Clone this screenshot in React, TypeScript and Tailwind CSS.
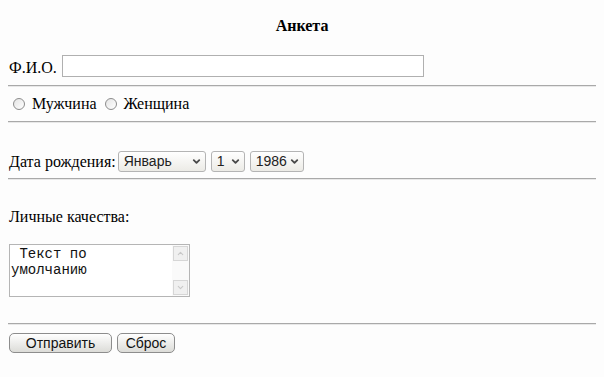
import { ChevronDown } from 'lucide-react'

const serif = { fontFamily: '"Liberation Serif", "Times New Roman", serif' }

function Rule() {
    return <div className="mx-2 h-[2px] border-t border-[#a9a9a9] border-b border-b-[#e8e8e8]" />
}

function Radio({ label }: { label: string }) {
    return (
        <label className="flex items-center">
            <span className="mr-[7px] h-[12px] w-[12px] rounded-full border border-[#8c8c8c] bg-gradient-to-br from-[#e4e4e4] to-white" />
            <span>{label}</span>
        </label>
    )
}

function Select({ value, width }: { value: string, width: number }) {
    return (
        <div
            className="flex h-[21px] items-center justify-between rounded-[3px] border border-[#b4b4b4] bg-gradient-to-b from-white to-[#ecebe6] pl-[5px] pr-[3px] text-[14px] text-[#222]"
            style={{ width, fontFamily: '"Liberation Sans", Arial, sans-serif' }}>
            <span>{value}</span>
            <ChevronDown className="h-[11px] w-[11px] text-[#4a4a4a]" strokeWidth={4} />
        </div>
    )
}

function Button({ children, width }: { children: string, width: number }) {
    return (
        <button
            className="h-[20px] rounded-[5px] border border-[#8d8d8d] bg-gradient-to-b from-white to-[#dcdcd8] text-[14px] leading-none text-[#111]"
            style={{ width, fontFamily: '"Liberation Sans", Arial, sans-serif' }}>
            {children}
        </button>
    )
}

export default function App() {
    return (
        <div className="h-[377px] w-[604px] bg-[#fdfdfd] text-[16px] text-black" style={serif}>
            <div className="pt-[17px] text-center text-[16px] font-bold leading-[18px]">Анкета</div>

            <div className="mt-[20px] flex h-[22px] items-center pl-[9px]">
                <span className="mr-[5px] pt-[3px]">Ф.И.О.</span>
                <div className="h-[22px] w-[362px] border border-[#b0b0b0] bg-white" />
            </div>

            <div className="mt-[8px]"><Rule /></div>

            <div className="mt-[8px] flex h-[18px] items-center gap-[8px] pl-[13px]">
                <Radio label="Мужчина" />
                <Radio label="Женщина" />
            </div>

            <div className="mt-[8px]"><Rule /></div>

            <div className="mt-[27px] flex h-[22px] items-center gap-[5px] pl-[9px]">
                <span className="mr-[-3px] pt-[2px]">Дата рождения:</span>
                <Select value="Январь" width={88} />
                <Select value="1" width={34} />
                <Select value="1986" width={54} />
            </div>

            <div className="mt-[6px]"><Rule /></div>

            <div className="mt-[27px] pl-[9px] leading-[20px]">Личные качества:</div>

            <div className="ml-[9px] mt-[17px] flex h-[53px] w-[181px] border border-[#b5b5b5] bg-white">
                <div
                    className="flex-1 whitespace-pre pl-[1px] pt-[1px] text-[14px] leading-[16px] text-[#111]"
                    style={{ fontFamily: '"Liberation Mono", "Courier New", monospace' }}>
                    {' Текст по\nумолчанию'}
                </div>
                <div className="flex w-[17px] flex-col justify-between bg-[#fafafa] p-[1px]">
                    <div className="flex h-[15px] items-center justify-center border border-[#d6d6d6] bg-[#f0f0f0]">
                        <ChevronDown className="h-[9px] w-[9px] rotate-180 text-[#c8c8c8]" strokeWidth={3} />
                    </div>
                    <div className="flex h-[15px] items-center justify-center border border-[#d6d6d6] bg-[#f0f0f0]">
                        <ChevronDown className="h-[9px] w-[9px] text-[#c8c8c8]" strokeWidth={3} />
                    </div>
                </div>
            </div>

            <div className="mt-[26px]"><Rule /></div>

            <div className="ml-[9px] mt-[8px] flex gap-[5px]">
                <Button width={103}>Отправить</Button>
                <Button width={58}>Сброс</Button>
            </div>
        </div>
    )
}
